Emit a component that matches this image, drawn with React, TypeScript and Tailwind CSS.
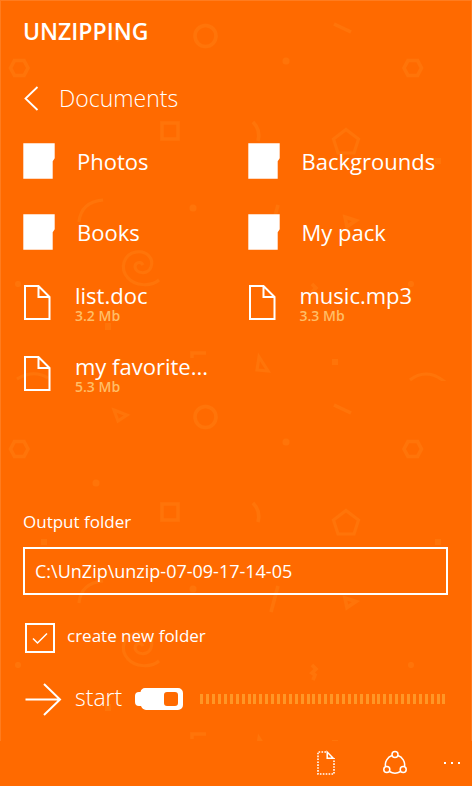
import { useState } from "react";
import type { ReactNode } from "react";

type Entry = { name: string; size?: string };

const entries: Entry[] = [
  { name: "Photos" },
  { name: "Backgrounds" },
  { name: "Books" },
  { name: "My pack" },
  { name: "list.doc", size: "3.2 Mb" },
  { name: "music.mp3", size: "3.3 Mb" },
  { name: "my favorite...", size: "5.3 Mb" },
];

const ticks = Array.from({ length: 42 }, (_, i) => i);

function Doodles() {
  return (
    <svg className="absolute inset-0 h-full w-full" aria-hidden="true">
      <defs>
        <pattern id="doodles" x="-1" y="-1" width="472" height="381" patternUnits="userSpaceOnUse">
          <g fill="none" stroke="#ff7409" strokeWidth="3.5">
            <circle cx="205.500" cy="36" r="10.500" />
            <path d="M14.500 60.500h9.500l4 7.500-4 7.500h-9.500l-4-7.500z" />
            <path d="M408 60.500h9.500l4 7.500-4 7.500H408l-4-7.500z" />
            <path d="M334 24l17 8" />
            <path d="M162 123h16v16h-16z" />
            <path d="M346 129.500l12.500 9.500-4.500 14h-16l-4.500-14z" strokeWidth="3" />
            <path d="M253 122q8 8 5 19" />
            <path d="M79 222q2-20 24-22" strokeWidth="3" />
            <path d="M278 205l-7 26" />
            <path d="M345 217l11 3.500-9 6z" />
            <path d="M114 29l13 5-9 6z" strokeWidth="3" />
            <path d="M259 357l-2 13 11 1z" strokeWidth="3" />
            <path d="M312 284l4 4-4 4 3 2-2 5" />
            <path d="M192 358v-5h14" />
            <path d="M17 379q17-10 31-1M410 380q17-13 35 2" strokeWidth="3" />
            <path
              d="M159 280c-8 7-24 6-31-2-9-10-4-24 8-26 11-2 18 7 15 15-3 8-15 7-16 0 0-5 6-6 8-2"
              strokeWidth="3"
            />
          </g>
          <g fill="#ff7409">
            <circle cx="286" cy="61" r="3.500" />
            <circle cx="96" cy="102" r="3.500" />
            <circle cx="193" cy="208" r="3.500" />
            <circle cx="18" cy="284" r="3" />
            <circle cx="411" cy="284" r="3" />
            <path d="M435 158h6v6h-6zM41 158h6v6h-6zM105 323h6v7h-6zM332 359h6v6h-6z" />
          </g>
        </pattern>
      </defs>
      <rect width="100%" height="100%" fill="url(#doodles)" />
    </svg>
  );
}

function FolderIcon() {
  return (
    <svg width="32" height="36" viewBox="0 0 32 36" fill="#fff" aria-hidden="true">
      <path d="M.3.200h31.400v15l-2 3v17.500H.3z" />
    </svg>
  );
}

function FileIcon() {
  return (
    <svg
      width="32"
      height="36"
      viewBox="0 0 32 36"
      fill="none"
      stroke="#fff"
      strokeWidth="2"
      aria-hidden="true"
    >
      <path d="M2 1h13.500L26.500 12v22H2zM15.500 1v11h11" />
    </svg>
  );
}

function BarButton({ label, children }: { label: string; children: ReactNode }) {
  return (
    <button type="button" aria-label={label} className="flex h-8 items-center">
      {children}
    </button>
  );
}

export default function App() {
  const [path, setPath] = useState("C:\\UnZip\\unzip-07-09-17-14-05");
  const [create, setCreate] = useState(true);

  return (
    <div className="flex min-h-screen flex-col bg-[#ff6a00] font-['Open_Sans','Noto_Sans',sans-serif] text-white">
      <main className="relative grow border-x border-t border-[#ff7c1f] pr-[23px] pb-6 pl-[22px]">
        <Doodles />
        <div className="relative">
          <h1 className="pt-[14px] text-[23px] leading-8 font-semibold">UNZIPPING</h1>

          <button type="button" className="mt-[35px] flex h-8 items-center gap-5">
            <svg width="16" height="26" viewBox="0 0 16 26" fill="none" stroke="#fff" strokeWidth="1.800" aria-hidden="true">
              <path d="M14.500 2L2.500 13.500l12 11.500" />
            </svg>
            <span className="text-[23px] leading-8 font-light">Documents</span>
          </button>

          <ul className="mt-[29px] grid grid-cols-2 gap-x-6 gap-y-[35px]">
            {entries.map((e) => (
              <li key={e.name} className="h-9">
                <button
                  type="button"
                  className={`flex h-9 items-center text-left whitespace-nowrap ${e.size ? "gap-5" : "gap-[22px]"}`}
                >
                  {e.size ? <FileIcon /> : <FolderIcon />}
                  <span className="flex flex-col">
                    <span className={`text-[22px] ${e.size ? "leading-[26px]" : "leading-8"}`}>{e.name}</span>
                    {e.size && (
                      <span className="text-[14px] leading-4 font-semibold text-[#ffbe66]">{e.size}</span>
                    )}
                  </span>
                </button>
              </li>
            ))}
          </ul>

          <label htmlFor="output" className="mt-[118px] block text-[17px] leading-6">
            Output folder
          </label>
          <input
            id="output"
            type="text"
            value={path}
            onChange={(ev) => setPath(ev.target.value)}
            className="mt-[13px] block h-12 w-full border-2 border-white bg-transparent px-[10px] text-[18px] outline-none"
          />

          <div className="mt-7 flex items-center gap-3 pl-[2px]">
            <span className="relative flex h-[30px] w-[30px]">
              <input
                id="create"
                type="checkbox"
                checked={create}
                onChange={(ev) => setCreate(ev.target.checked)}
                className="h-[30px] w-[30px] appearance-none border-2 border-white"
              />
              {create && (
                <svg
                  className="pointer-events-none absolute inset-0"
                  width="30"
                  height="30"
                  viewBox="0 0 30 30"
                  fill="none"
                  stroke="#fff"
                  strokeWidth="1.500"
                  aria-hidden="true"
                >
                  <path d="M8 15.500l4.500 4.500 9.500-9.500" />
                </svg>
              )}
            </span>
            <label htmlFor="create" className="pb-1 text-[17px] leading-6">
              create new folder
            </label>
          </div>

          <div className="mt-7 flex items-center gap-4">
            <button type="button" className="flex items-center gap-3">
              <svg width="40" height="34" viewBox="0 0 40 34" fill="none" stroke="#fff" strokeWidth="2" aria-hidden="true">
                <path d="M2.500 17.500H37M21 2l16 15.500L21 33" />
              </svg>
              <span className="pb-1 text-[23px] leading-8 font-light">start</span>
              <svg width="50" height="24" viewBox="-1 0 50 24" fill="#fff" aria-hidden="true">
                <path
                  fillRule="evenodd"
                  d="M10 1h33a5 5 0 0 1 5 5v12a5 5 0 0 1-5 5H11a6 6 0 0 1-5-4H4a4 4 0 0 1-4-4V9a4 4 0 0 1 4-4h1.500A5 5 0 0 1 10 1zM32 5a3 3 0 0 0-3 3v8a3 3 0 0 0 3 3h8a3 3 0 0 0 3-3V8a3 3 0 0 0-3-3z"
                />
              </svg>
            </button>
            <div
              role="progressbar"
              aria-label="Unzip progress"
              aria-valuemin={0}
              aria-valuemax={100}
              aria-valuenow={0}
              className="mr-[2px] flex h-[10px] grow justify-between"
            >
              {ticks.map((t) => (
                <span key={t} className="w-[3px] bg-[#ff9626]" />
              ))}
            </div>
          </div>
        </div>
      </main>

      <footer className="flex h-[46px] items-center justify-end pr-[10px] pb-[2px]">
        <BarButton label="Select files">
          <svg className="mr-[46px]" width="20" height="26" viewBox="0 0 20 26" fill="none" stroke="#fff" aria-hidden="true">
            <path d="M10 2H2v22h16V8" strokeWidth="1.600" strokeDasharray="1.600 1.300" />
            <path d="M11.200 2v6.200h6z" strokeWidth="1.500" />
          </svg>
        </BarButton>
        <BarButton label="Share">
          <svg className="mr-9" width="26" height="26" viewBox="0 0 26 26" fill="none" stroke="#fff" strokeWidth="1.500" aria-hidden="true">
            <circle cx="13" cy="4.500" r="3" />
            <circle cx="4.800" cy="19.500" r="3" />
            <circle cx="21.200" cy="19.500" r="3" />
            <path d="M10 5.500a10 10 0 0 0-6.500 11M16 5.500a10 10 0 0 1 6.500 11M7.500 21.500a10.500 10.500 0 0 0 11 0" />
          </svg>
        </BarButton>
        <BarButton label="More">
          <svg width="18" height="26" viewBox="0 0 18 26" fill="#fff" aria-hidden="true">
            <path d="M0 12h2v2H0zM7 12h2v2H7zM14 12h2v2h-2z" />
          </svg>
        </BarButton>
      </footer>
    </div>
  );
}
